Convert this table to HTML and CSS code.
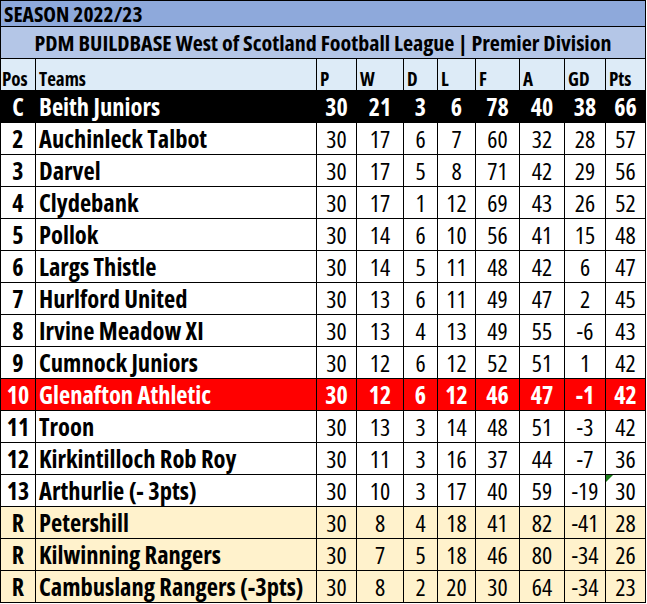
FILE: index.html
```html
<!DOCTYPE html>
<html lang="en">
<head>
<meta charset="utf-8">
<title>SEASON 2022/23 - Premier Division</title>
<link rel="stylesheet" href="styles.css">
</head>
<body>
<div class="league">
  <div class="row merged season"><div class="cell">SEASON 2022/23</div></div>
  <div class="row merged title"><div class="cell">PDM BUILDBASE West of Scotland Football League | Premier Division</div></div>
  <div class="row head">
    <div class="cell">Pos</div><div class="cell">Teams</div><div class="cell">P</div><div class="cell">W</div><div class="cell">D</div><div class="cell">L</div><div class="cell">F</div><div class="cell">A</div><div class="cell">GD</div><div class="cell">Pts</div>
  </div>
  <div class="row champ">
    <div class="cell pos">C</div><div class="cell team">Beith Juniors</div><div class="cell num">30</div><div class="cell num">21</div><div class="cell num">3</div><div class="cell num">6</div><div class="cell num">78</div><div class="cell num">40</div><div class="cell num">38</div><div class="cell num">66</div>
  </div>
  <div class="row">
    <div class="cell pos">2</div><div class="cell team">Auchinleck Talbot</div><div class="cell num">30</div><div class="cell num">17</div><div class="cell num">6</div><div class="cell num">7</div><div class="cell num">60</div><div class="cell num">32</div><div class="cell num">28</div><div class="cell num">57</div>
  </div>
  <div class="row">
    <div class="cell pos">3</div><div class="cell team">Darvel</div><div class="cell num">30</div><div class="cell num">17</div><div class="cell num">5</div><div class="cell num">8</div><div class="cell num">71</div><div class="cell num">42</div><div class="cell num">29</div><div class="cell num">56</div>
  </div>
  <div class="row">
    <div class="cell pos">4</div><div class="cell team">Clydebank</div><div class="cell num">30</div><div class="cell num">17</div><div class="cell num">1</div><div class="cell num">12</div><div class="cell num">69</div><div class="cell num">43</div><div class="cell num">26</div><div class="cell num">52</div>
  </div>
  <div class="row">
    <div class="cell pos">5</div><div class="cell team">Pollok</div><div class="cell num">30</div><div class="cell num">14</div><div class="cell num">6</div><div class="cell num">10</div><div class="cell num">56</div><div class="cell num">41</div><div class="cell num">15</div><div class="cell num">48</div>
  </div>
  <div class="row">
    <div class="cell pos">6</div><div class="cell team">Largs Thistle</div><div class="cell num">30</div><div class="cell num">14</div><div class="cell num">5</div><div class="cell num">11</div><div class="cell num">48</div><div class="cell num">42</div><div class="cell num">6</div><div class="cell num">47</div>
  </div>
  <div class="row">
    <div class="cell pos">7</div><div class="cell team">Hurlford United</div><div class="cell num">30</div><div class="cell num">13</div><div class="cell num">6</div><div class="cell num">11</div><div class="cell num">49</div><div class="cell num">47</div><div class="cell num">2</div><div class="cell num">45</div>
  </div>
  <div class="row">
    <div class="cell pos">8</div><div class="cell team">Irvine Meadow XI</div><div class="cell num">30</div><div class="cell num">13</div><div class="cell num">4</div><div class="cell num">13</div><div class="cell num">49</div><div class="cell num">55</div><div class="cell num">-6</div><div class="cell num">43</div>
  </div>
  <div class="row">
    <div class="cell pos">9</div><div class="cell team">Cumnock Juniors</div><div class="cell num">30</div><div class="cell num">12</div><div class="cell num">6</div><div class="cell num">12</div><div class="cell num">52</div><div class="cell num">51</div><div class="cell num">1</div><div class="cell num">42</div>
  </div>
  <div class="row highlight">
    <div class="cell pos">10</div><div class="cell team">Glenafton Athletic</div><div class="cell num">30</div><div class="cell num">12</div><div class="cell num">6</div><div class="cell num">12</div><div class="cell num">46</div><div class="cell num">47</div><div class="cell num">-1</div><div class="cell num">42</div>
  </div>
  <div class="row">
    <div class="cell pos">11</div><div class="cell team">Troon</div><div class="cell num">30</div><div class="cell num">13</div><div class="cell num">3</div><div class="cell num">14</div><div class="cell num">48</div><div class="cell num">51</div><div class="cell num">-3</div><div class="cell num">42</div>
  </div>
  <div class="row">
    <div class="cell pos">12</div><div class="cell team">Kirkintilloch Rob Roy</div><div class="cell num">30</div><div class="cell num">11</div><div class="cell num">3</div><div class="cell num">16</div><div class="cell num">37</div><div class="cell num">44</div><div class="cell num">-7</div><div class="cell num">36</div>
  </div>
  <div class="row">
    <div class="cell pos">13</div><div class="cell team">Arthurlie (- 3pts)</div><div class="cell num">30</div><div class="cell num">10</div><div class="cell num">3</div><div class="cell num">17</div><div class="cell num">40</div><div class="cell num">59</div><div class="cell num">-19</div><div class="cell num note">30</div>
  </div>
  <div class="row relegated">
    <div class="cell pos">R</div><div class="cell team">Petershill</div><div class="cell num">30</div><div class="cell num">8</div><div class="cell num">4</div><div class="cell num">18</div><div class="cell num">41</div><div class="cell num">82</div><div class="cell num">-41</div><div class="cell num">28</div>
  </div>
  <div class="row relegated">
    <div class="cell pos">R</div><div class="cell team">Kilwinning Rangers</div><div class="cell num">30</div><div class="cell num">7</div><div class="cell num">5</div><div class="cell num">18</div><div class="cell num">46</div><div class="cell num">80</div><div class="cell num">-34</div><div class="cell num">26</div>
  </div>
  <div class="row relegated">
    <div class="cell pos">R</div><div class="cell team">Cambuslang Rangers (-3pts)</div><div class="cell num">30</div><div class="cell num">8</div><div class="cell num">2</div><div class="cell num">20</div><div class="cell num">30</div><div class="cell num">64</div><div class="cell num">-34</div><div class="cell num">23</div>
  </div>
</div>
</body>
</html>
```
FILE: styles.css
```css
html, body {
  margin: 0;
  padding: 0;
  background: #ffffff;
}

.league {
  width: 644px;
  padding: 1px;
  background: #000000;
  display: flex;
  flex-direction: column;
  gap: 1px;
  font-family: "Open Sans", "Lato", sans-serif;
  font-stretch: 75%;
  color: #000000;
}

.row {
  display: grid;
  grid-template-columns: 34px 280px 39px 46px 33px 37px 43px 44px 40px 39px;
  gap: 1px;
  height: 31px;
}

.row.merged {
  grid-template-columns: 1fr;
}

.cell {
  background: #ffffff;
  white-space: nowrap;
  position: relative;
}

.season {
  height: 25px;
}

.season .cell {
  background: #8ea9db;
  font-weight: bold;
  font-size: 21.5px;
  line-height: 25px;
  padding-left: 3px;
}

.title .cell {
  background: #b4c6e7;
  font-weight: bold;
  font-size: 22px;
  line-height: 31px;
  text-align: center;
}

.head .cell {
  background: #ddebf7;
  font-weight: bold;
  font-size: 19px;
  line-height: 21px;
  padding: 10px 0 0 3px;
}

.head .cell:first-child {
  padding-left: 1px;
}

.pos {
  font-weight: bold;
  font-size: 24px;
  line-height: 31px;
  text-align: center;
}

.team {
  font-weight: bold;
  font-size: 24.5px;
  line-height: 31px;
  padding-left: 3px;
}

.num {
  font-size: 24px;
  line-height: 31px;
  text-align: center;
}

.champ .cell {
  background: #000000;
  color: #ffffff;
  font-weight: bold;
}

.highlight .cell {
  background: #ff0000;
  color: #ffffff;
  font-weight: bold;
}

.relegated .cell {
  background: #fff2cc;
}

.note::before {
  content: "";
  position: absolute;
  top: 0;
  left: 0;
  border-top: 7px solid #1b7f1b;
  border-right: 7px solid transparent;
}
```
